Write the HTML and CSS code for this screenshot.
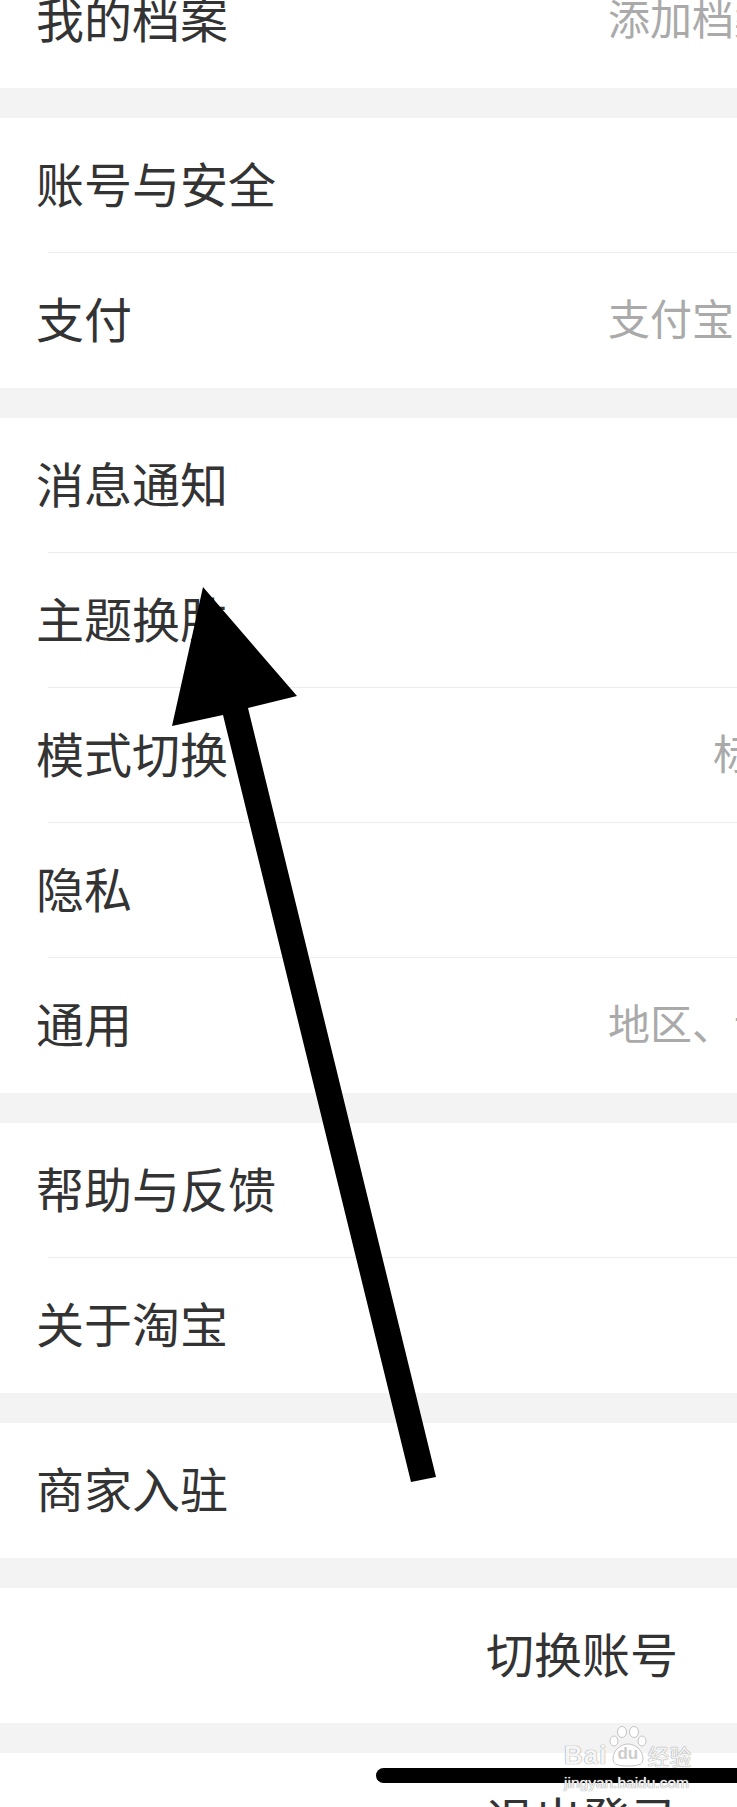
FILE: index.html
```html
<!DOCTYPE html>
<html lang="zh-CN">
<head>
    <meta charset="UTF-8">
    <meta name="viewport" content="width=device-width, initial-scale=1.0">
    <title>设置</title>
    <link rel="stylesheet" href="styles.css">
</head>
<body>
    <div class="page">
        <div class="group group-first">
            <div class="row">
                <span class="label">我的档案</span>
                <span class="value">添加档案</span>
            </div>
        </div>

        <div class="group">
            <div class="row">
                <span class="label">账号与安全</span>
            </div>
            <div class="row">
                <span class="label">支付</span>
                <span class="value">支付宝</span>
            </div>
        </div>

        <div class="group">
            <div class="row">
                <span class="label">消息通知</span>
            </div>
            <div class="row">
                <span class="label">主题换肤</span>
            </div>
            <div class="row">
                <span class="label">模式切换</span>
                <span class="value value-far">标准</span>
            </div>
            <div class="row">
                <span class="label">隐私</span>
            </div>
            <div class="row">
                <span class="label">通用</span>
                <span class="value">地区、语言</span>
            </div>
        </div>

        <div class="group">
            <div class="row">
                <span class="label">帮助与反馈</span>
            </div>
            <div class="row">
                <span class="label">关于淘宝</span>
            </div>
        </div>

        <div class="group">
            <div class="row">
                <span class="label">商家入驻</span>
            </div>
        </div>

        <div class="group">
            <div class="row action">
                <span class="label">切换账号</span>
            </div>
        </div>

        <div class="group">
            <div class="row action">
                <span class="label">退出登录</span>
            </div>
        </div>

        <!-- arrow drawn over the screenshot -->
        <svg class="arrow" width="737" height="1807" viewBox="0 0 737 1807">
            <polygon points="203,587 297,696 248,708 436,1477 411,1482 223,715 172,726" fill="#000"/>
        </svg>

        <div class="scribble"></div>

        <div class="watermark">
            <div class="wm-top">
                <span class="wm-bai">Bai</span>
                <span class="wm-paw">
                    <svg width="38" height="41" viewBox="0 0 38 41">
                        <ellipse cx="13" cy="6" rx="4.5" ry="5.5"/>
                        <ellipse cx="25" cy="6" rx="4.5" ry="5.5"/>
                        <ellipse cx="5" cy="15" rx="4" ry="5"/>
                        <ellipse cx="33" cy="15" rx="4" ry="5"/>
                        <path d="M4 33 C4 24 12 18 19 18 C26 18 34 24 34 33 C34 39 28 40 19 40 C10 40 4 39 4 33 Z"/>
                    </svg>
                    <span class="wm-du">du</span>
                </span>
                <span class="wm-jy">经验</span>
            </div>
            <div class="wm-url">jingyan.baidu.com</div>
        </div>
    </div>
</body>
</html>
```

FILE: styles.css
```css
* {
    margin: 0;
    padding: 0;
    box-sizing: border-box;
}

body {
    width: 737px;
    height: 1807px;
    overflow: hidden;
    background: #f3f3f3;
    font-family: "Noto Sans CJK SC", "Noto Sans", sans-serif;
}

.page {
    position: relative;
    width: 737px;
    height: 1807px;
    overflow: hidden;
}

.group {
    background: #fff;
    margin-bottom: 30px;
}

.group-first {
    margin-top: -47px;
}

.row {
    position: relative;
    height: 135px;
    display: grid;
    grid-template-columns: 572px 1fr;
    align-items: center;
    padding-left: 36px;
    padding-bottom: 8px;
    white-space: nowrap;
}

.row::after {
    content: "";
    position: absolute;
    left: 48px;
    right: 0;
    bottom: 0;
    height: 1px;
    background: #ececec;
}

.row:last-child::after {
    display: none;
}

.label {
    font-size: 48px;
    line-height: 1;
    color: #333;
}

.value {
    font-size: 42px;
    line-height: 1;
    color: #aaa;
}

.value-far {
    padding-left: 105px;
}

.action {
    padding-left: 486px;
}

.arrow {
    position: absolute;
    left: 0;
    top: 0;
}

.scribble {
    position: absolute;
    left: 376px;
    top: 1768px;
    width: 400px;
    height: 15px;
    background: #000;
    border-radius: 8px;
}

.watermark {
    position: absolute;
    left: 564px;
    top: 1726px;
    width: 134px;
    color: rgba(255, 255, 255, 0.92);
    text-shadow: 0 0 1px #999, 0 0 1px #999;
    font-family: "Liberation Sans", sans-serif;
}

.wm-top {
    display: flex;
    align-items: flex-end;
    height: 41px;
}

.wm-bai {
    font-size: 26px;
    font-weight: bold;
    letter-spacing: 1px;
    line-height: 1;
    margin-bottom: -1px;
}

.wm-paw {
    position: relative;
    width: 38px;
    height: 41px;
    margin-left: 2px;
}

.wm-paw svg {
    fill: rgba(255, 255, 255, 0.92);
    stroke: #c4c4c4;
    stroke-width: 1;
}

.wm-du {
    position: absolute;
    left: 8px;
    top: 18px;
    font-size: 17px;
    font-weight: bold;
    color: #ccc;
    text-shadow: none;
}

.wm-jy {
    font-family: "Noto Sans CJK SC", sans-serif;
    font-size: 22px;
    line-height: 1;
    margin-bottom: 1px;
}

.wm-url {
    font-size: 15.5px;
    line-height: 1;
    margin-top: 8px;
}
```
